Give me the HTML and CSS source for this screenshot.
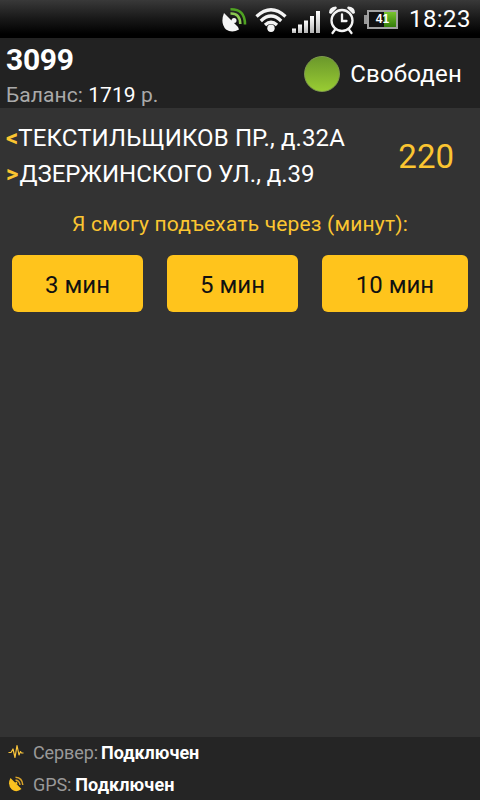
FILE: index.html
```html
<!DOCTYPE html>
<html lang="ru">
<head>
<meta charset="utf-8">
<title>Заказ</title>
<link rel="stylesheet" href="styles.css">
</head>
<body>
<div class="statusbar">
  <svg class="i-gps" width="26" height="26" viewBox="0 0 26 26">
    <path d="M3 6 L17 20 L18 22.500 Q11 26.500 5 22.500 Q-1 16 3 6Z" fill="#f4f4f4"/>
    <path d="M8.500 14 L13 13.300 L12.500 17Z" fill="#f4f4f4"/>
    <circle cx="13" cy="13.500" r="2.500" fill="#f4f4f4"/>
    <g fill="none" stroke-width="2.600"><path d="M9.500 6.500 Q19 6 19.300 17" stroke="#8bc850"/><path d="M9.500 2.200 Q24 2 24 17.500" stroke="#4fa322"/></g>
  </svg>
  <svg class="i-wifi" width="32" height="26" viewBox="0 0 32 26">
    <g fill="none" stroke="#f4f4f4" stroke-width="3.300"><path d="M1.500 9.500 Q16 -4 30.500 9.500"/><path d="M5.800 14 Q16 4.200 26.200 14"/><path d="M10 18 Q16 12.500 22 18"/></g>
    <circle cx="16" cy="21.200" r="3.700" fill="#f4f4f4"/>
  </svg>
  <svg class="i-signal" width="28" height="24" viewBox="0 0 28 24">
    <defs><linearGradient id="sg" x1="0" y1="0" x2="0" y2="1"><stop offset="0" stop-color="#fff"/><stop offset="1" stop-color="#b4b4b4"/></linearGradient></defs>
    <g fill="url(#sg)"><rect x="0" y="18.500" width="4" height="4.500"/><rect x="6" y="14.500" width="4" height="8.500"/><rect x="12" y="10.500" width="4" height="12.500"/><rect x="18" y="6" width="4" height="17"/><rect x="24" y="1" width="4" height="22"/></g>
  </svg>
  <svg class="i-alarm" width="28" height="30" viewBox="0 0 28 30">
    <g fill="none" stroke="#f4f4f4" stroke-width="2.300" stroke-linecap="round"><circle cx="14" cy="15.500" r="10.500"/><path d="M14 9.500V16H18.500M7.500 24L4.500 28M20.500 24L23.500 28"/></g>
    <path d="M1 8 Q1 1.500 8 1.500 L9 3 L3 9Z M27 8 Q27 1.500 20 1.500 L19 3 L25 9Z" fill="#f4f4f4"/>
  </svg>
  <div class="battery"><span class="battery-tip"></span><span class="battery-body">41</span></div>
  <span class="clock">18:23</span>
</div>
<header class="header">
  <div class="account">
    <div class="number">3099</div>
    <div class="balance">Баланс: <span class="amount">1719</span> р.</div>
  </div>
  <div class="state"><span class="lamp"></span><span class="state-text">Свободен</span></div>
</header>
<main class="main">
  <section class="order">
    <div class="route">
      <div class="from"><b>&lt;</b><span>ТЕКСТИЛЬЩИКОВ ПР., д.32А</span></div>
      <div class="to"><b>&gt;</b><span>ДЗЕРЖИНСКОГО УЛ., д.39</span></div>
    </div>
    <div class="price">220</div>
  </section>
  <div class="prompt"><span>Я смогу подъехать через (минут):</span></div>
  <div class="buttons">
    <button>3 мин</button>
    <button>5 мин</button>
    <button>10 мин</button>
  </div>
</main>
<footer class="footer">
  <div class="row">
    <svg width="16" height="16" viewBox="0 0 16 16"><path d="M.5 8.500H3L5 5L7 13.500L9 1.500L11 11L12.500 7.500L13.500 9H15.500" fill="none" stroke="#fbc63c" stroke-width="1.200" stroke-linejoin="round"/></svg>
    <span class="label">Сервер:</span><b class="srv">Подключен</b>
  </div>
  <div class="row">
    <svg width="16" height="16" viewBox="0 0 16 16"><path d="M2.500 2L13.500 13Q8.500 17 3.800 13.500Q-1 8.500 2.500 2Z" fill="#fcc21f"/><path d="M6.500 7L9 5.500L9.500 8.500Z" fill="#fcc21f"/><path d="M7.500 4Q11.500 4.500 12 9M7.500 1.200Q14.300 1.500 14.800 9" fill="none" stroke="#dca52a" stroke-width="1.500"/></svg>
    <span class="label">GPS:</span><b class="gps">Подключен</b>
  </div>
</footer>
</body>
</html>
```
FILE: styles.css
```css
* { box-sizing: border-box; }
body {
  margin: 0;
  width: 480px;
  height: 800px;
  overflow: hidden;
  display: flex;
  flex-direction: column;
  background: #333;
  color: #fff;
  font-family: Roboto, "Noto Sans", sans-serif;
  white-space: nowrap;
}
.statusbar {
  height: 38px;
  flex: none;
  display: flex;
  align-items: flex-start;
  padding-left: 221px;
  background: linear-gradient(#393939, #1b1b1b 45%, #000 90%);
}
.statusbar svg { flex: none; }
.i-gps { margin-top: 7px; }
.i-wifi { margin: 7px 0 0 8px; }
.i-signal { margin: 10px 0 0 5px; }
.i-alarm { margin: 5px 0 0 8px; }
.battery { display: flex; align-items: center; margin: 10px 0 0 8px; }
.battery-tip { width: 3px; height: 9px; background: #999; }
.battery-body {
  width: 31px;
  height: 19px;
  border: 2px solid #a2a2a2;
  background: linear-gradient(90deg, #111 0 55%, transparent 55%), linear-gradient(#79c52e, #347c0b);
  font: bold 12px/15px "Liberation Sans", sans-serif;
  text-align: center;
}
.clock { margin-left: 11px; font-size: 24px; line-height: 39px; letter-spacing: .4px; }
.header {
  height: 70px;
  flex: none;
  display: flex;
  justify-content: space-between;
  background: #222;
}
.account { padding-left: 6px; }
.number { font-size: 30px; line-height: 44px; font-weight: 700; letter-spacing: -.3px; }
.balance { font-size: 21px; line-height: 26px; color: #aaa; letter-spacing: .07px; }
.amount { color: #fff; }
.state { display: flex; align-items: center; padding: 2px 18px 0 0; }
.lamp {
  width: 36px;
  height: 36px;
  margin-right: 10px;
  border: 1px solid #7f9c4c;
  border-radius: 50%;
  background: linear-gradient(#6b982b, #99cc33);
}
.state-text { font-size: 24px; letter-spacing: .2px; }
.main { flex: 1; padding-top: 12px; }
.order { display: flex; justify-content: space-between; align-items: center; padding: 0 26px 0 6px; }
.route { font-size: 24px; line-height: 36px; }
.from { letter-spacing: .12px; }
.to b { margin-right: 1px; }
.route b, .price, .prompt { color: #fbc531; }
.price { font-size: 33px; }
.prompt { margin-top: 14px; font-size: 21px; line-height: 36px; text-align: center; letter-spacing: .18px; }
.buttons { display: grid; grid-template-columns: 131px 131px 146px; gap: 24px; padding: 13px 12px 0; }
button {
  height: 57px;
  padding: 2px 0 0;
  border: 0;
  border-radius: 6px;
  background: #ffc41c;
  color: #111;
  font: 24px Roboto, "Noto Sans", sans-serif;
}
.footer { height: 63px; flex: none; background: #252525; font-size: 18px; }
.row { height: 32px; display: flex; align-items: center; padding: 0 0 2px 8px; }
.row svg { margin-right: 9px; }
.label { color: #999; margin-right: 4px; letter-spacing: -.1px; }
.srv { margin-left: -1px; }
.gps { letter-spacing: .1px; }
```
